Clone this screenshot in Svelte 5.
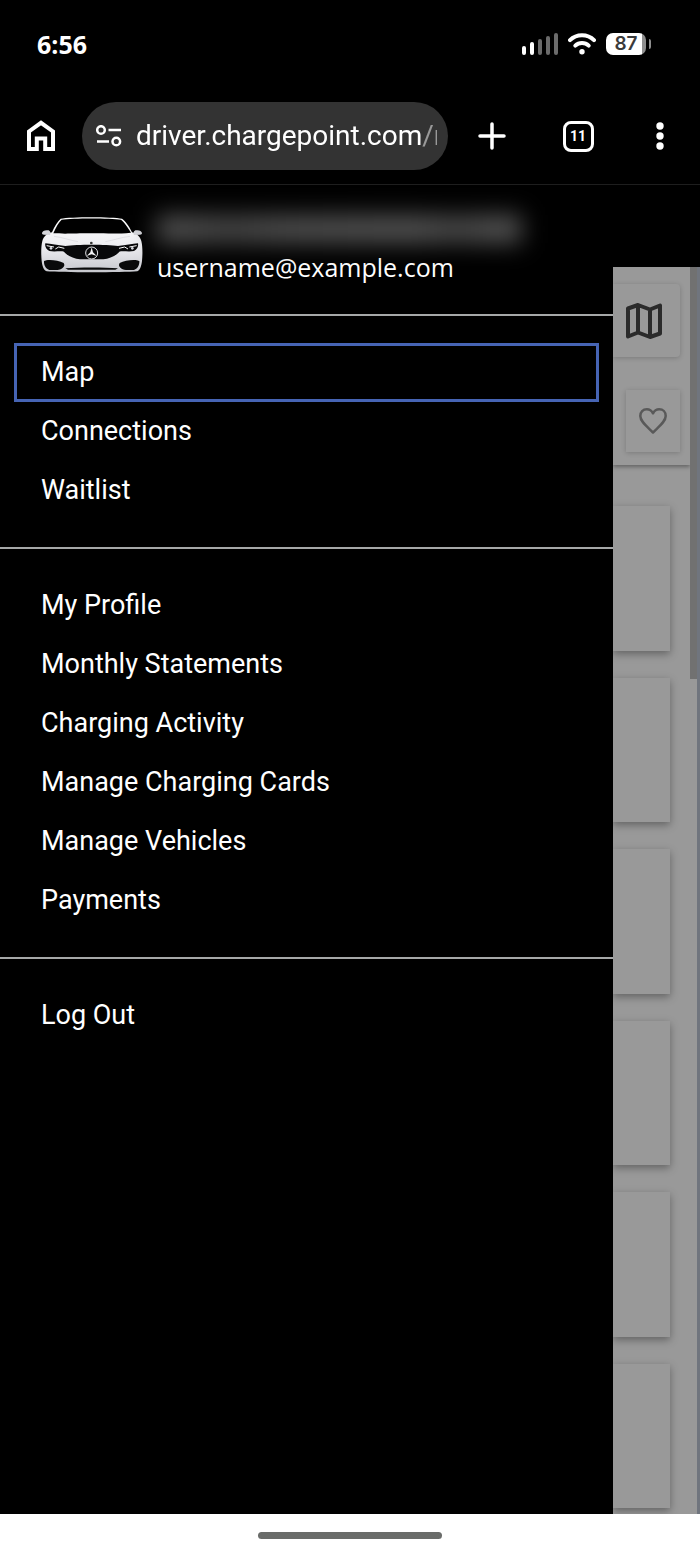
<script>
  const groups = [
    ['Map', 'Connections', 'Waitlist'],
    [
      'My Profile',
      'Monthly Statements',
      'Charging Activity',
      'Manage Charging Cards',
      'Manage Vehicles',
      'Payments'
    ],
    ['Log Out']
  ];

  let active = $state('Map');
  let url = $state('driver.chargepoint.com/r');
</script>

<div class="screen">
  <header class="status">
    <span class="time">6:56</span>
    <div class="indicators">
      <svg class="signal" viewBox="0 0 36 22" aria-hidden="true">
        <rect x="0" y="13" width="4" height="9" rx="2" />
        <rect x="8" y="9" width="4" height="13" rx="2" />
        <rect class="off" x="16" y="6" width="4" height="16" rx="2" />
        <rect class="off" x="24" y="3" width="4" height="19" rx="2" />
        <rect class="off" x="32" y="0" width="4" height="22" rx="2" />
      </svg>
      <svg class="wifi" viewBox="0 0 28 22" aria-hidden="true">
        <path d="M2 7.2C8.5 .6 19.5 .6 26 7.2" />
        <path d="M7.3 12.6C11 9 17 9 20.7 12.6" />
        <circle cx="14" cy="18.7" r="2.7" />
      </svg>
      <div class="battery">
        <span class="level">87</span>
        <span class="nub"></span>
      </div>
    </div>
  </header>

  <div class="toolbar">
    <button class="tool home" aria-label="Home">
      <svg width="28" height="32" viewBox="0 0 28 32">
        <path d="M2 29V11.5L14 2.8L26 11.5V29H18.2V18.5H9.8V29Z" />
      </svg>
    </button>
    <label class="address">
      <svg width="26" height="22" viewBox="0 0 26 22" aria-hidden="true">
        <circle cx="5" cy="5" r="3.8" />
        <path d="M12.5 5H25M1 16.5H13" />
        <circle cx="20.3" cy="16.5" r="3.8" />
      </svg>
      <input type="text" aria-label="Address" bind:value={url} />
    </label>
    <button class="tool add" aria-label="New tab">
      <svg width="28" height="28" viewBox="0 0 28 28"><path d="M14 2V26M2 14H26" /></svg>
    </button>
    <button class="tool tabs" aria-label="Open tabs"><span>11</span></button>
    <button class="tool more" aria-label="More">
      <svg width="8" height="28" viewBox="0 0 8 28">
        <circle cx="4" cy="4" r="3.7" />
        <circle cx="4" cy="14" r="3.7" />
        <circle cx="4" cy="24" r="3.7" />
      </svg>
    </button>
  </div>

  <main>
    <nav>
      <div class="account">
        <svg class="car" viewBox="33 30 306 180" role="img" aria-label="Vehicle">
          <defs>
            <linearGradient id="body" x1="0" y1="0" x2="0" y2="1">
              <stop offset="0" stop-color="#ffffff" />
              <stop offset="0.55" stop-color="#ececf0" />
              <stop offset="1" stop-color="#c6c7cd" />
            </linearGradient>
          </defs>
          <path
            fill="url(#body)"
            d="M66 82C74 62 84 48 92 41C122 35 246 35 276 41C286 48 298 64 306 82C320 86 330 94 334 108C338 124 338 148 336 168C334 184 330 196 322 199C278 203 92 203 50 199C41 196 37 184 35 168C33 148 33 124 37 108C41 94 51 86 66 82Z"
          />
          <path fill="#000" d="M70 85C78 66 87 51 95 44C128 39 240 39 273 44C282 51 294 68 303 83C262 87 240 85 185 85C130 85 110 87 70 85Z" />
          <path fill="#d5d6db" d="M36 84C37 77 46 74 56 76C62 79 63 86 60 90L42 89C38 89 36 87 36 84ZM336 84C335 77 326 74 316 76C310 79 309 86 312 90L330 89C334 89 336 87 336 84Z" />
          <path fill="none" stroke="#d6d7dc" stroke-width="2" d="M72 94C98 97 120 106 144 110M300 94C272 97 250 106 226 110" />
          <path fill="#08080a" d="M46 115C62 117 84 120 106 123C142 118 228 118 264 123C286 120 308 117 324 115C326 123 322 133 312 138C298 141 276 137 268 140C258 153 238 161 220 163H150C132 161 112 153 102 140C94 137 72 141 58 138C48 133 44 123 46 115Z" />
          <path fill="none" stroke="#fff" stroke-width="3" d="M50 122L72 126M76 132L86 126L103 130M320 122L298 126M294 132L284 126L267 130" />
          <circle cx="63" cy="130" r="4" fill="#d8dae2" />
          <circle cx="307" cy="130" r="4" fill="#d8dae2" />
          <path fill="#0a0a0b" d="M42 168C50 162 84 164 101 174C108 184 96 194 82 195H58C46 191 41 178 42 168ZM328 168C320 162 286 164 269 174C262 184 274 194 288 195H312C324 191 329 178 328 168Z" />
          <path fill="#0a0a0b" d="M106 190C148 187 222 187 264 190L256 194H114Z" />
          <circle cx="184" cy="114" r="4" fill="#333" />
          <circle cx="185" cy="144" r="18" fill="#0a0a0b" stroke="#e4e4e8" stroke-width="3" />
          <path fill="#f4f4f6" d="M185 127L189 142L200 153L185 148L170 153L181 142Z" />
        </svg>
        <div class="who">
          <div class="name" aria-hidden="true"></div>
          <div class="email">username@example.com</div>
        </div>
      </div>

      {#each groups as items}
        <ul>
          {#each items as item}
            <li>
              <a href="#top" class:active={item === active} onclick={() => (active = item)}>{item}</a>
            </li>
          {/each}
        </ul>
      {/each}
    </nav>

    <!-- Dimmed page behind the drawer -->
    <aside>
      <div class="page">
        <div class="page-head">
          <button class="map-btn" aria-label="Map view">
            <svg width="36" height="36" viewBox="0 0 36 36">
              <path d="M2 5.5L12 2L24 6.5L34 2.5V30.5L24 34L12 29.5L2 33.5ZM12 2V29.5M24 6.5V34" />
            </svg>
          </button>
          <button class="fav-btn" aria-label="Favorites">
            <svg width="28" height="26" viewBox="0 0 28 26">
              <path d="M14 24.5C8 18.5 1.3 13.5 1.3 8C1.3 4 4 1.3 7.8 1.3C10.5 1.3 12.8 3 14 5.3C15.2 3 17.5 1.3 20.2 1.3C24 1.3 26.7 4 26.7 8C26.7 13.5 20 18.5 14 24.5Z" />
            </svg>
          </button>
        </div>
        <div class="cards">
          {#each Array(6) as _}
            <div class="card"></div>
          {/each}
        </div>
      </div>
      <div class="track"><div class="thumb"></div></div>
    </aside>
  </main>

  <footer><div class="handle"></div></footer>
</div>

<style>
  :global(body) {
    background: #000;
  }

  .screen {
    display: flex;
    flex-direction: column;
    min-height: 100vh;
    background: #000;
    color: #fff;
    font-family: Roboto, sans-serif;
  }

  button {
    border: 0;
    padding: 0;
    background: none;
    color: inherit;
    font: inherit;
  }

  /* Status bar */
  .status {
    display: flex;
    align-items: center;
    justify-content: space-between;
    height: 88px;
    padding: 0 49px 0 37px;
  }
  .time {
    font: 700 25px/28px 'Open Sans', sans-serif;
  }
  .indicators {
    display: flex;
    align-items: center;
    gap: 10px;
  }
  .signal {
    width: 36px;
    height: 22px;
    fill: #fff;
  }
  .signal .off {
    fill: #6b6b6b;
  }
  .wifi {
    width: 28px;
    height: 22px;
    fill: #fff;
  }
  .wifi path {
    fill: none;
    stroke: #fff;
    stroke-width: 4;
    stroke-linecap: round;
  }
  .battery {
    display: flex;
    align-items: center;
    gap: 3px;
  }
  .level {
    width: 40px;
    border-radius: 7px;
    background: linear-gradient(to right, #fff 36px, #8e8e8e 36px);
    color: #3a3a3a;
    font: 600 19px/22px Inter, sans-serif;
    text-align: center;
  }
  .nub {
    width: 2px;
    height: 10px;
    border-radius: 0 2px 2px 0;
    background: #8e8e8e;
  }

  /* Browser toolbar */
  .toolbar {
    display: flex;
    align-items: center;
    height: 96px;
    border-bottom: 1px solid #1e1e1e;
  }
  .tool {
    display: flex;
    align-items: center;
    justify-content: center;
    height: 68px;
  }
  .tool svg {
    fill: none;
    stroke: #fff;
    stroke-width: 4;
  }
  .home { width: 82px; }
  .add { width: 88px; }
  .tabs { width: 84px; }
  .more { width: 80px; }
  .add svg {
    stroke-width: 3.5;
    stroke-linecap: round;
  }
  .more svg {
    fill: #fff;
    stroke: none;
  }
  .tabs span {
    box-sizing: border-box;
    width: 31px;
    height: 31px;
    border: 3px solid #fff;
    border-radius: 8px;
    font: 700 14px/25px Roboto, sans-serif;
    text-align: center;
  }
  .address {
    display: flex;
    flex: 1;
    align-items: center;
    gap: 14px;
    min-width: 0;
    height: 68px;
    padding: 0 11px 0 14px;
    border-radius: 34px;
    background: #333;
    box-sizing: border-box;
  }
  .address svg {
    flex: none;
    fill: none;
    stroke: #fff;
    stroke-width: 2.5;
  }
  .address input {
    flex: 1;
    min-width: 0;
    padding: 0;
    border: 0;
    outline: 0;
    background: none;
    color: #fff;
    font: 400 28px/36px Roboto, sans-serif;
    mask-image: linear-gradient(to right, #000 286px, rgba(0, 0, 0, 0.5) 286px);
  }

  /* Drawer */
  main {
    display: flex;
    flex: 1;
  }
  nav {
    flex: 1;
    min-width: 0;
  }
  .account {
    display: flex;
    align-items: flex-start;
    gap: 14px;
    padding: 30px 41px 29px;
  }
  .car {
    flex: none;
    width: 102px;
    height: 60px;
  }
  .who {
    display: flex;
    flex: 1;
    flex-direction: column;
    gap: 6px;
    min-width: 0;
  }
  .name {
    max-width: 364px;
    height: 28px;
    background: linear-gradient(to right, #555, #464646 20%, #505050 35%, #555 70%, #484848 82%, #5a5a5a);
    filter: blur(12px);
  }
  .email {
    font: 400 25px/36px 'Open Sans', sans-serif;
  }
  ul {
    margin: 0;
    padding: 27px 14px;
    border-top: 2px solid #a6a8a8;
    list-style: none;
  }
  a {
    display: block;
    box-sizing: border-box;
    height: 59px;
    padding: 0 24px;
    border: 3px solid transparent;
    color: #fff;
    font-size: 27px;
    line-height: 52px;
    text-decoration: none;
  }
  a.active {
    border-color: #4664b4;
  }

  /* Page behind */
  aside {
    display: flex;
    width: 87px;
    margin-top: 82px;
    background: #999;
  }
  .page {
    display: flex;
    flex: 1;
    flex-direction: column;
    overflow: hidden;
  }
  .page-head {
    display: flex;
    flex-direction: column;
    align-items: flex-end;
    gap: 33px;
    padding: 17px 10px 13px 0;
    box-shadow: 0 2px 4px rgba(0, 0, 0, 0.35);
  }
  .page-head button {
    display: flex;
    align-items: center;
    justify-content: center;
    box-shadow: 0 1px 5px rgba(0, 0, 0, 0.2);
  }
  .page-head svg {
    fill: none;
    stroke-linejoin: round;
  }
  .page-head .map-btn {
    justify-content: flex-start;
    width: 67px;
    height: 73px;
    padding-left: 13px;
    border-radius: 0 4px 4px 0;
  }
  .map-btn svg {
    stroke: #2b2b2b;
    stroke-width: 4;
  }
  .fav-btn {
    width: 54px;
    height: 62px;
  }
  .fav-btn svg {
    stroke: #595959;
    stroke-width: 2.5;
  }
  .cards {
    display: flex;
    flex: 1;
    flex-direction: column;
    gap: 27px;
    padding: 41px 20px 6px 0;
  }
  .card {
    flex: 1;
    box-shadow: 0 3px 8px rgba(0, 0, 0, 0.35);
    background: #999;
  }
  .track {
    width: 7px;
    border-right: 3px solid #70757e;
  }
  .thumb {
    height: 33%;
    background: #717171;
  }

  footer {
    display: flex;
    justify-content: center;
    align-items: center;
    height: 42px;
    background: #fff;
  }
  .handle {
    width: 184px;
    height: 7px;
    border-radius: 4px;
    background: #6a6c6a;
  }
</style>
